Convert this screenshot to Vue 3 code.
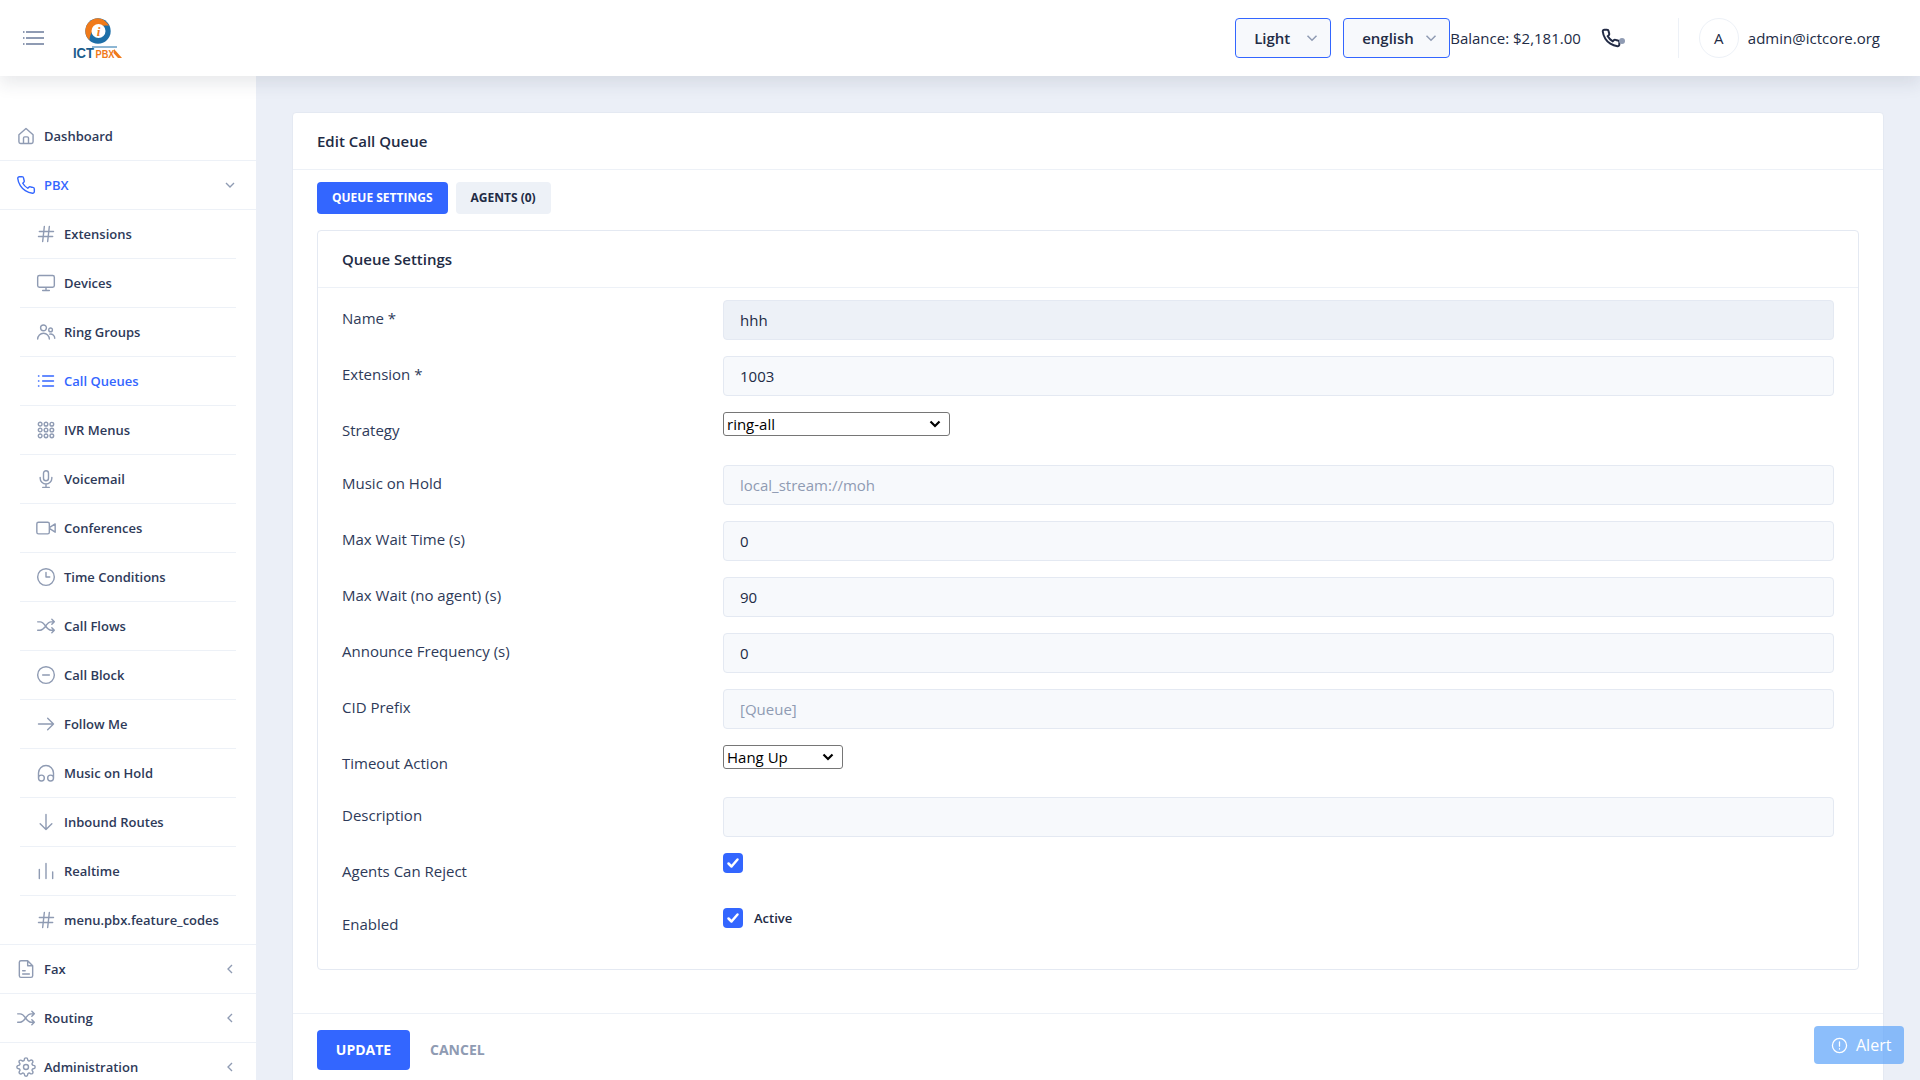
<script setup>
const circle = (x, y, r) => `M${x - r} ${y}a${r} ${r} 0 1 0 ${2 * r} 0a${r} ${r} 0 1 0 ${-2 * r} 0`
const icons = {
  home: 'M3.5 10.5 12 3l8.5 7.5V19a2 2 0 0 1-2 2h-13a2 2 0 0 1-2-2zM9 21v-6.5a1.5 1.5 0 0 1 1.5-1.5h3a1.5 1.5 0 0 1 1.5 1.5V21',
  phone: 'M22 16.92v3a2 2 0 0 1-2.18 2 19.79 19.79 0 0 1-8.63-3.07 19.5 19.5 0 0 1-6-6 19.79 19.79 0 0 1-3.07-8.67A2 2 0 0 1 4.11 2h3a2 2 0 0 1 2 1.72 12.84 12.84 0 0 0 .7 2.81 2 2 0 0 1-.45 2.11L8.09 9.91a16 16 0 0 0 6 6l1.27-1.27a2 2 0 0 1 2.11-.45 12.84 12.84 0 0 0 2.81.7A2 2 0 0 1 22 16.92z',
  hash: 'M4 9h17M3 15h17M10 3 8 21M16 3l-2 18',
  monitor: 'M4 3h16a2 2 0 0 1 2 2v10a2 2 0 0 1-2 2H4a2 2 0 0 1-2-2V5a2 2 0 0 1 2-2zM8 21h8M12 17v4',
  people: circle(9, 7, 3.5) + 'M2 20.5a7 7 0 0 1 14 0' + circle(17.5, 9.5, 2.2) + 'M16.5 14.5a5 5 0 0 1 6 5',
  list: 'M8 6h13M8 12h13M8 18h13M3 6h.5M3 12h.5M3 18h.5',
  grid: [5, 12, 19].flatMap(y => [5, 12, 19].map(x => circle(x, y, 2.2))).join(''),
  mic: 'M12 2a3 3 0 0 1 3 3v6a3 3 0 0 1-6 0V5a3 3 0 0 1 3-3zM5 10v1a7 7 0 0 0 14 0v-1M12 18v4M8 22h8',
  video: 'M3 5h11a2 2 0 0 1 2 2v10a2 2 0 0 1-2 2H3a2 2 0 0 1-2-2V7a2 2 0 0 1 2-2zM23 7l-7 4.5v1L23 17z',
  clock: circle(12, 12, 10) + 'M12 6.5V12h4.5',
  shuffle: 'M2 7h3c6 0 7 10 13 10h4M2 17h3c6 0 7-10 13-10h4M19 4l3 3-3 3M19 14l3 3-3 3',
  minus: circle(12, 12, 10) + 'M8 12h8',
  right: 'M3 12h18M14 5l7 7-7 7',
  head: 'M3 18v-6a9 9 0 0 1 18 0v6' + circle(6.5, 18, 3.5) + circle(17.5, 18, 3.5),
  down: 'M12 3v18M5 14l7 7 7-7',
  bars: 'M4 10v11M12 3v18M20 13v8',
  file: 'M14 2H6a2 2 0 0 0-2 2v16a2 2 0 0 0 2 2h12a2 2 0 0 0 2-2V8zM14 2v6h6M8 14h3M8 18h8',
  gear: circle(12, 12, 3) + 'M19.4 15a1.65 1.65 0 0 0 .33 1.82l.06.06a2 2 0 0 1 0 2.83 2 2 0 0 1-2.83 0l-.06-.06a1.65 1.65 0 0 0-1.82-.33 1.65 1.65 0 0 0-1 1.51V21a2 2 0 0 1-2 2 2 2 0 0 1-2-2v-.09A1.65 1.65 0 0 0 9 19.4a1.65 1.65 0 0 0-1.82.33l-.06.06a2 2 0 0 1-2.83 0 2 2 0 0 1 0-2.83l.06-.06a1.65 1.65 0 0 0 .33-1.82 1.65 1.65 0 0 0-1.51-1H3a2 2 0 0 1-2-2 2 2 0 0 1 2-2h.09A1.65 1.65 0 0 0 4.6 9a1.65 1.65 0 0 0-.33-1.82l-.06-.06a2 2 0 0 1 0-2.83 2 2 0 0 1 2.83 0l.06.06a1.65 1.65 0 0 0 1.82.33H9a1.65 1.65 0 0 0 1-1.51V3a2 2 0 0 1 2-2 2 2 0 0 1 2 2v.09a1.65 1.65 0 0 0 1 1.51 1.65 1.65 0 0 0 1.82-.33l.06-.06a2 2 0 0 1 2.83 0 2 2 0 0 1 0 2.83l-.06.06a1.65 1.65 0 0 0-.33 1.82V9a1.65 1.65 0 0 0 1.51 1H21a2 2 0 0 1 2 2 2 2 0 0 1-2 2h-.09a1.65 1.65 0 0 0-1.51 1z',
  alert: circle(12, 12, 10) + 'M12 7v6M12 16.5v.5',
}
const menu = [
  { label: 'Dashboard', icon: 'home' },
  { label: 'PBX', icon: 'phone', active: true, chev: 'down' },
  { label: 'Extensions', icon: 'hash', sub: true },
  { label: 'Devices', icon: 'monitor', sub: true },
  { label: 'Ring Groups', icon: 'people', sub: true },
  { label: 'Call Queues', icon: 'list', sub: true, active: true },
  { label: 'IVR Menus', icon: 'grid', sub: true },
  { label: 'Voicemail', icon: 'mic', sub: true },
  { label: 'Conferences', icon: 'video', sub: true },
  { label: 'Time Conditions', icon: 'clock', sub: true },
  { label: 'Call Flows', icon: 'shuffle', sub: true },
  { label: 'Call Block', icon: 'minus', sub: true },
  { label: 'Follow Me', icon: 'right', sub: true },
  { label: 'Music on Hold', icon: 'head', sub: true },
  { label: 'Inbound Routes', icon: 'down', sub: true },
  { label: 'Realtime', icon: 'bars', sub: true },
  { label: 'menu.pbx.feature_codes', icon: 'hash', sub: true, last: true },
  { label: 'Fax', icon: 'file', chev: 'left' },
  { label: 'Routing', icon: 'shuffle', chev: 'left' },
  { label: 'Administration', icon: 'gear', chev: 'left' },
]
const rows = [
  { label: 'Name *', type: 'input', value: 'hhh', disabled: true },
  { label: 'Extension *', type: 'input', value: '1003' },
  { label: 'Strategy', type: 'select', value: 'ring-all', cls: 'sel-wide' },
  { label: 'Music on Hold', type: 'input', placeholder: 'local_stream://moh' },
  { label: 'Max Wait Time (s)', type: 'input', value: '0' },
  { label: 'Max Wait (no agent) (s)', type: 'input', value: '90' },
  { label: 'Announce Frequency (s)', type: 'input', value: '0' },
  { label: 'CID Prefix', type: 'input', placeholder: '[Queue]' },
  { label: 'Timeout Action', type: 'select', value: 'Hang Up', cls: 'sel-narrow' },
  { label: 'Description', type: 'input', value: '' },
  { label: 'Agents Can Reject', type: 'check' },
  { label: 'Enabled', type: 'check', text: 'Active' },
]
</script>

<template>
  <div class="app">
    <header class="top">
      <div class="top-left">
        <svg class="burger" viewBox="0 0 21 14" fill="none" stroke="#8f9bb3" stroke-width="2.200">
          <path d="M3 1h18M3 7h18M3 13h18M0 1h1.500M0 7h1.500M0 13h1.500" />
        </svg>
        <svg class="logo" viewBox="0 -3 56 46">
          <circle cx="26" cy="13" r="12.700" fill="#1d6fa8" />
          <path d="M27 .4A12.700 12.700 0 0 0 17.500 22.500C18 15 22 7 37 7.500 34 3 31 .7 27 .4z" fill="#f07a1a" />
          <circle cx="26.500" cy="13" r="7" fill="#fff" />
          <text x="26.500" y="18" class="logo-i">i</text>
          <path d="M20 29h25" stroke="#1d6fa8" stroke-width="1" />
          <text x="1" y="40" class="logo-ict" textLength="21" lengthAdjust="spacingAndGlyphs">ICT</text>
          <text x="23.500" y="40" class="logo-pbx" textLength="19" lengthAdjust="spacingAndGlyphs">PBX</text>
          <path d="M42 31l8 9h-4l-4.500-5z" fill="#f07a1a" />
        </svg>
      </div>
      <div class="top-right">
        <div class="pick pick-theme"><span>Light</span><svg class="pick-chev" viewBox="0 0 24 24"><path d="M6 9l6 6 6-6" /></svg></div>
        <div class="pick pick-lang"><span>english</span><svg class="pick-chev" viewBox="0 0 24 24"><path d="M6 9l6 6 6-6" /></svg></div>
        <span class="balance">Balance: $2,181.00</span>
        <div class="call">
          <svg class="call-icon" viewBox="0 0 24 24"><path :d="icons.phone" /></svg>
          <i class="call-dot"></i>
        </div>
        <div class="user">
          <span class="avatar">A</span>
          <span class="email">admin@ictcore.org</span>
        </div>
      </div>
    </header>

    <div class="body">
      <aside class="side">
        <div
          v-for="item in menu"
          :key="item.label"
          class="item"
          :class="{ sub: item.sub, active: item.active, last: item.last }"
        >
          <svg class="ic" viewBox="0 0 24 24"><path :d="icons[item.icon]" /></svg>
          <span class="item-label">{{ item.label }}</span>
          <svg v-if="item.chev" class="chev" viewBox="0 0 24 24">
            <path :d="item.chev === 'down' ? 'M6 9l6 6 6-6' : 'M15 6l-6 6 6 6'" />
          </svg>
        </div>
      </aside>

      <main class="main">
        <section class="card">
          <div class="card-head">Edit Call Queue</div>
          <div class="card-body">
            <div class="tabs">
              <button class="tab tab-on">QUEUE SETTINGS</button>
              <button class="tab">AGENTS (0)</button>
            </div>
            <div class="inner">
              <div class="inner-head">Queue Settings</div>
              <div class="inner-body">
                <div v-for="row in rows" :key="row.label" class="row">
                  <label class="row-label">{{ row.label }}</label>
                  <div class="row-field">
                    <input
                      v-if="row.type === 'input'"
                      class="field"
                      :class="{ dim: row.disabled }"
                      :value="row.value"
                      :placeholder="row.placeholder"
                    />
                    <select v-else-if="row.type === 'select'" class="sel" :class="row.cls">
                      <option>{{ row.value }}</option>
                    </select>
                    <div v-else class="check-wrap" :class="{ low: row.text }">
                      <span class="check">
                        <svg viewBox="0 0 20 20"><path d="M5.500 10.500l3 3 6-7" /></svg>
                      </span>
                      <span v-if="row.text" class="check-text">{{ row.text }}</span>
                    </div>
                  </div>
                </div>
              </div>
            </div>
          </div>
          <div class="card-foot">
            <button class="btn">UPDATE</button>
            <button class="link">CANCEL</button>
          </div>
        </section>
      </main>
    </div>

    <div class="alert">
      <svg viewBox="0 0 24 24"><path :d="icons.alert" /></svg>
      <span>Alert</span>
    </div>
  </div>
</template>

<style>
html, body { margin: 0; height: 100%; overflow: hidden; }
</style>

<style scoped>
.app {
  height: 1080px;
  display: flex;
  flex-direction: column;
  font-family: "Open Sans", sans-serif;
  color: #222b45;
  background: #ebeff7;
  overflow: hidden;
  position: relative;
}
.top {
  height: 76px;
  flex: none;
  display: flex;
  justify-content: space-between;
  align-items: center;
  background: #fff;
  box-shadow: 0 8px 16px rgba(44, 51, 73, .1);
  position: relative;
  z-index: 2;
  padding: 0 40px 0 23px;
}
.top-left { display: flex; align-items: center; }
.burger { width: 21px; height: 14px; margin-right: 28px; }
.logo { width: 56px; height: 46px; }
.logo-i { font: italic 700 13px "Liberation Serif", serif; fill: #f07a1a; text-anchor: middle; }
.logo-ict { font: 700 15px "Liberation Sans", sans-serif; fill: #1b5c8c; }
.logo-pbx { font: 700 10.500px "Liberation Sans", sans-serif; fill: #f07a1a; }
.top-right { display: flex; align-items: center; }
.pick {
  height: 40px;
  box-sizing: border-box;
  display: flex;
  align-items: center;
  background: #f7f9fc;
  border: 1px solid #3366ff;
  border-radius: 4px;
  font-size: 15px;
  font-weight: 600;
  padding-left: 18px;
}
.pick-theme { width: 96px; margin-right: 12px; }
.pick-lang { width: 107px; }
.pick-chev { width: 18px; height: 18px; margin-left: auto; margin-right: 9px; fill: none; stroke: #8f9bb3; stroke-width: 2; }
.balance { font-size: 15px; color: #222b45; margin-right: 20px; }
.call { position: relative; width: 24px; height: 24px; margin-right: 53px; }
.call-icon { width: 20px; height: 20px; margin-top: 2px; fill: none; stroke: #222b45; stroke-width: 2.400; display: block; }
.call-dot { position: absolute; right: 0; bottom: 6px; width: 6px; height: 6px; border-radius: 50%; background: #8f9bb3; }
.user { display: flex; align-items: center; border-left: 1px solid #edf1f7; padding-left: 20px; height: 40px; }
.avatar {
  width: 40px;
  height: 40px;
  box-sizing: border-box;
  border: 1px solid #edf1f7;
  border-radius: 50%;
  display: flex;
  align-items: center;
  justify-content: center;
  font-size: 15px;
  margin-right: 9px;
}
.email { font-size: 15px; }
.body { flex: 1; min-height: 0; display: flex; }
.side {
  width: 256px;
  flex: none;
  background: #fff;
  padding-top: 36px;
  box-sizing: border-box;
  overflow: hidden;
}
.item {
  height: 49px;
  box-sizing: border-box;
  display: flex;
  align-items: center;
  padding: 0 18px 0 16px;
  border-bottom: 1px solid #edf1f7;
  font-size: 13px;
  font-weight: 600;
  color: #2e3a59;
}
.item.sub { margin: 0 20px; padding: 0 0 0 16px; }
.item.sub.last { margin: 0; padding-left: 36px; }
.item.active { color: #3366ff; }
.ic {
  width: 20px;
  height: 20px;
  flex: none;
  margin-right: 8px;
  fill: none;
  stroke: #8f9bb3;
  stroke-width: 1.700;
  stroke-linecap: round;
  stroke-linejoin: round;
}
.item.active .ic { stroke: #3366ff; }
.chev { width: 16px; height: 16px; margin-left: auto; fill: none; stroke: #8f9bb3; stroke-width: 2; }
.main { flex: 1; min-width: 0; padding: 36px 36px 0; box-sizing: border-box; overflow: hidden; }
.card {
  background: #fff;
  border: 1px solid #e4e9f2;
  border-radius: 4px;
  box-sizing: border-box;
}
.card-head {
  height: 57px;
  box-sizing: border-box;
  border-bottom: 1px solid #edf1f7;
  padding: 0 24px;
  display: flex;
  align-items: center;
  font-size: 15px;
  font-weight: 600;
}
.card-body { padding: 12px 24px 43px; border-bottom: 1px solid #edf1f7; }
.tabs { display: flex; gap: 8px; margin-bottom: 16px; }
.tab {
  height: 32px;
  border: 0;
  border-radius: 4px;
  padding: 0 15px 1px;
  font: 700 12px "Open Sans", sans-serif;
  background: #edf1f7;
  color: #222b45;
}
.tab-on { background: #3366ff; color: #fff; }
.inner { border: 1px solid #e4e9f2; border-radius: 4px; box-sizing: border-box; }
.inner-head {
  height: 57px;
  box-sizing: border-box;
  border-bottom: 1px solid #edf1f7;
  padding: 0 24px;
  display: flex;
  align-items: center;
  font-size: 15px;
  font-weight: 600;
}
.inner-body { padding: 12px 24px 11px; }
.row { display: grid; grid-template-columns: 381px 1fr; margin-bottom: 16px; }
.row-label { font-size: 15px; line-height: 22.500px; padding: 7px 0; color: #2e3a59; }
.row-field { min-width: 0; }
.field {
  display: block;
  width: 100%;
  height: 40px;
  box-sizing: border-box;
  padding: 0 16px;
  background: #f7f9fc;
  border: 1px solid #e4e9f2;
  border-radius: 4px;
  font: 500 15px "Open Sans", sans-serif;
  color: #222b45;
  outline: none;
}
.field::placeholder { color: #8f9bb3; font-weight: 400; opacity: 1; }
.field.dim { background: #edf1f7; }
.sel {
  display: block;
  height: 24px;
  box-sizing: border-box;
  padding: 0 0 0 3px;
  font: 400 15px "Open Sans", sans-serif;
  color: #000;
  background: #fff url("data:image/svg+xml,%3Csvg xmlns='http://www.w3.org/2000/svg' width='12' height='8'%3E%3Cpath d='M1.500 1.500l4.500 4.500 4.500-4.500' fill='none' stroke='%23000' stroke-width='2.200'/%3E%3C/svg%3E") no-repeat right 8px center;
  border: 1px solid #767676;
  border-radius: 3px;
  appearance: none;
}
.sel-wide { width: 227px; }
.sel-narrow { width: 120px; }
.check-wrap { display: flex; align-items: center; }
.check-wrap.low { padding-top: 2px; }
.check { width: 20px; height: 20px; border-radius: 4px; background: #3366ff; display: block; }
.check svg { display: block; width: 20px; height: 20px; fill: none; stroke: #fff; stroke-width: 2.500; stroke-linecap: round; stroke-linejoin: round; }
.check-text { margin-left: 11px; font-size: 13px; font-weight: 600; color: #222b45; }
.card-foot { padding: 16px 24px; display: flex; align-items: center; }
.btn {
  width: 93px;
  height: 40px;
  border: 0;
  border-radius: 4px;
  padding: 0 0 2px;
  background: #3366ff;
  color: #fff;
  font: 700 14px "Open Sans", sans-serif;
}
.link {
  margin-left: 20px;
  border: 0;
  padding: 0 0 2px;
  background: none;
  color: #8f9bb3;
  font: 700 14px "Open Sans", sans-serif;
}
.alert {
  position: absolute;
  left: 1814px;
  top: 1026px;
  width: 90px;
  height: 38px;
  box-sizing: border-box;
  padding-left: 17px;
  display: flex;
  align-items: center;
  gap: 8px;
  border-radius: 4px;
  background: rgba(96, 165, 250, .72);
  color: #fff;
  font-size: 16px;
  z-index: 3;
}
.alert svg { width: 17px; height: 17px; fill: none; stroke: #fff; stroke-width: 1.800; stroke-linecap: round; }
</style>
